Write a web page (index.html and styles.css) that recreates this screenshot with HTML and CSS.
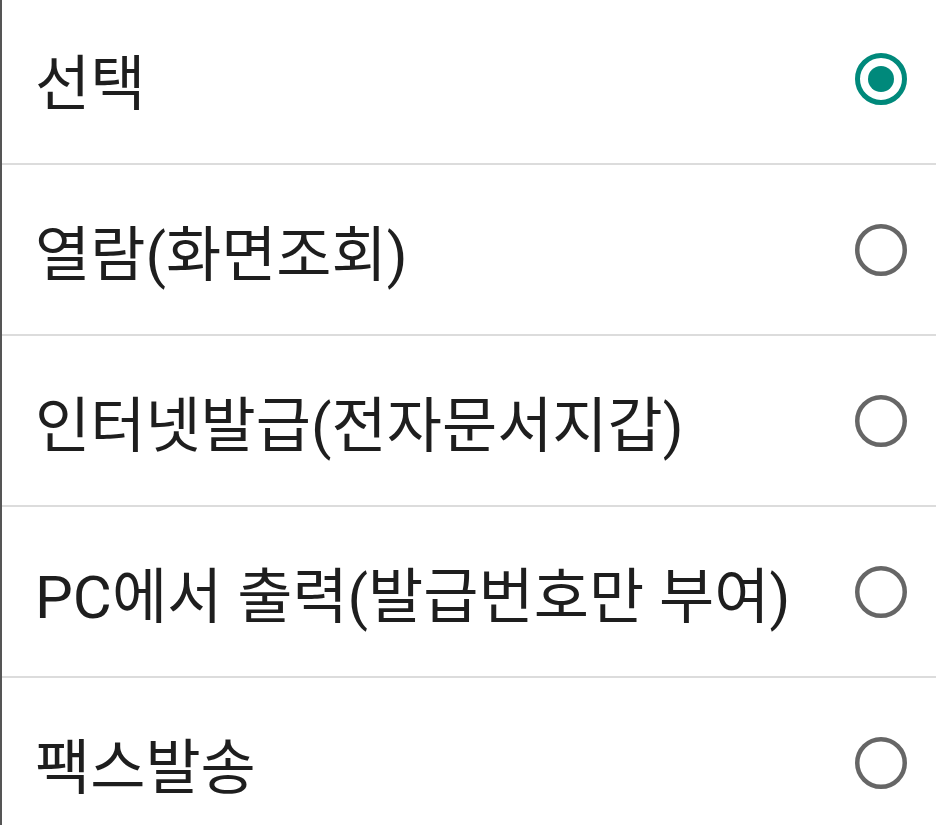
FILE: index.html
```html
<!DOCTYPE html>
<html lang="ko">
<head>
<meta charset="utf-8">
<link rel="stylesheet" href="styles.css">
</head>
<body>
<div class="frame">
  <ul class="options">
    <li class="option">
      <span class="label">선택</span>
      <svg class="radio" viewBox="0 0 52 52" width="52" height="52"><circle cx="26" cy="26" r="23.5" fill="none" stroke="#00897b" stroke-width="5"/><circle cx="26" cy="26" r="13" fill="#00897b"/></svg>
    </li>
    <li class="option">
      <span class="label">열람(화면조회)</span>
      <svg class="radio" viewBox="0 0 52 52" width="52" height="52"><circle cx="26" cy="26" r="23.75" fill="none" stroke="#666" stroke-width="4.5"/></svg>
    </li>
    <li class="option">
      <span class="label">인터넷발급(전자문서지갑)</span>
      <svg class="radio" viewBox="0 0 52 52" width="52" height="52"><circle cx="26" cy="26" r="23.75" fill="none" stroke="#666" stroke-width="4.5"/></svg>
    </li>
    <li class="option">
      <span class="label">PC에서 출력(발급번호만 부여)</span>
      <svg class="radio" viewBox="0 0 52 52" width="52" height="52"><circle cx="26" cy="26" r="23.75" fill="none" stroke="#666" stroke-width="4.5"/></svg>
    </li>
    <li class="option">
      <span class="label">팩스발송</span>
      <svg class="radio" viewBox="0 0 52 52" width="52" height="52"><circle cx="26" cy="26" r="23.75" fill="none" stroke="#666" stroke-width="4.5"/></svg>
    </li>
  </ul>
</div>
</body>
</html>
```
FILE: styles.css
```css
html, body {
  margin: 0;
  padding: 0;
  background: #fff;
  overflow: hidden;
}
.frame {
  width: 936px;
  height: 825px;
  box-sizing: border-box;
  border-left: 2px solid #555;
  overflow: hidden;
}
.options {
  list-style: none;
  margin: -6px 0 0 0;
  padding: 0;
}
.option {
  height: 169px;
  border-bottom: 2px solid #dcdcdc;
  display: flex;
  align-items: center;
  justify-content: space-between;
  padding: 0 29px 0 33px;
}
.label {
  font-family: Roboto, "Noto Sans CJK KR", sans-serif;
  font-size: 60px;
  font-weight: 400;
  color: #1e1e1e;
  white-space: nowrap;
}
.radio {
  flex: none;
  display: block;
}
```
